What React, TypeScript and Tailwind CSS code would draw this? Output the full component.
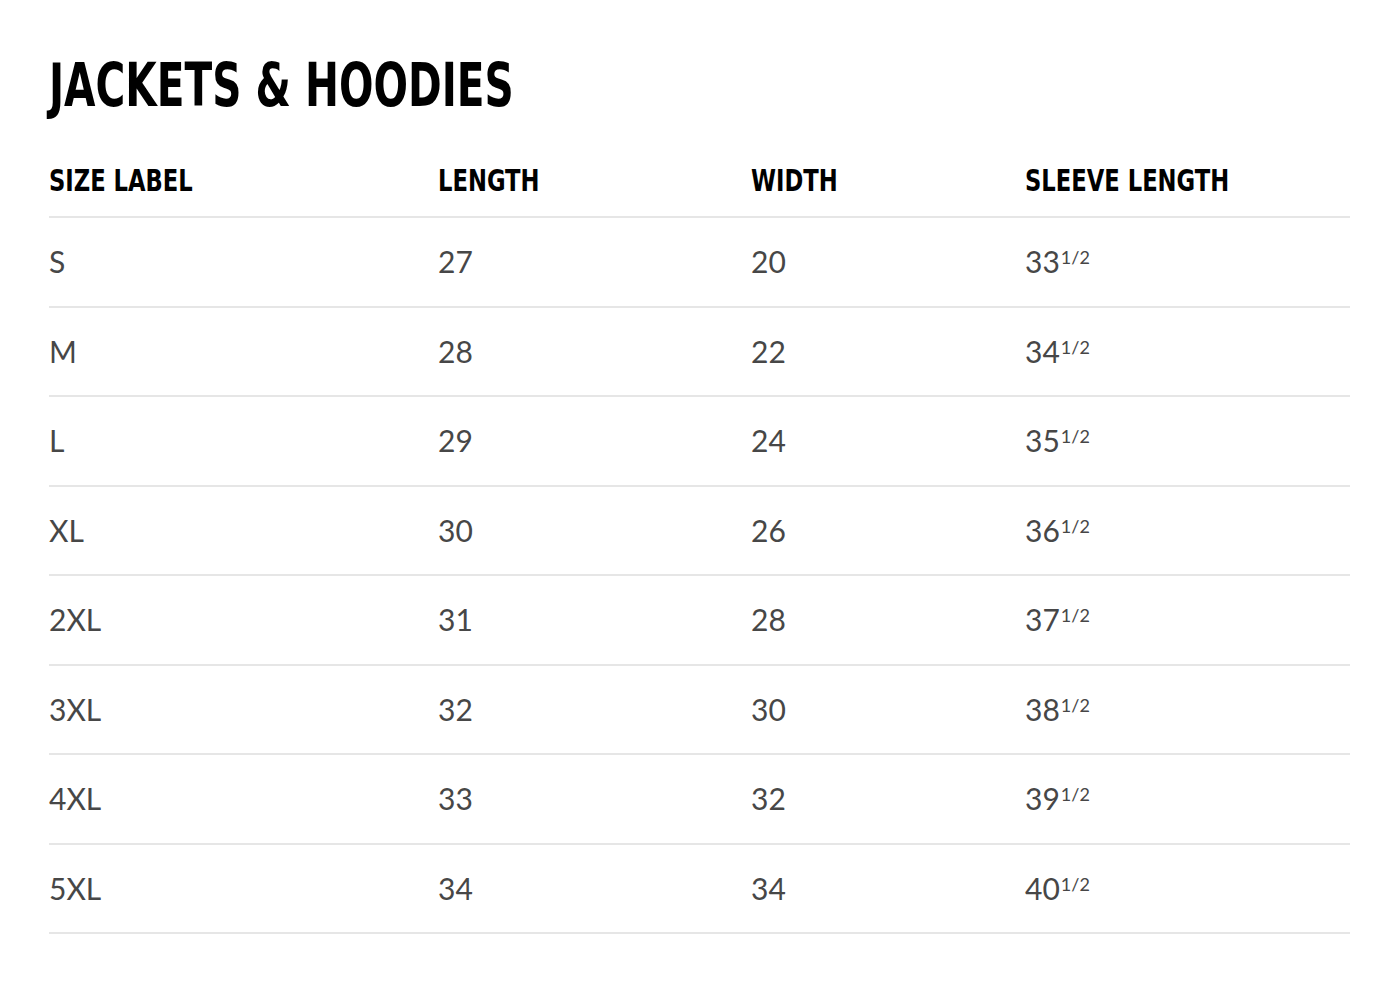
import * as React from "react";

const rows: [string, string, string, string][] = [
  ["S", "27", "20", "33"],
  ["M", "28", "22", "34"],
  ["L", "29", "24", "35"],
  ["XL", "30", "26", "36"],
  ["2XL", "31", "28", "37"],
  ["3XL", "32", "30", "38"],
  ["4XL", "33", "32", "39"],
  ["5XL", "34", "34", "40"],
];

// condensed heavy face, squeezed to match the narrow display font
const cond =
  "inline-block origin-left font-['DejaVu_Sans_Condensed','DejaVu_Sans',sans-serif] font-bold text-black whitespace-nowrap";
const grid = "grid grid-cols-[389px_313px_274px_1fr] items-center";

export default function App() {
  return (
    <div className="min-h-[998px] bg-white pl-[49px] pr-[50px] pt-[53px]">
      <h1 className={`${cond} scale-x-[0.752] text-[60px] leading-[64px]`}>JACKETS &amp; HOODIES</h1>
      <div className="mt-[37px]">
        <div className={`${grid} h-[64px] border-b-2 border-[#e6e6e6] pb-[8px]`}>
          {["SIZE LABEL", "LENGTH", "WIDTH", "SLEEVE LENGTH"].map((h) => (
            <div key={h}>
              <span className={`${cond} scale-x-[0.84] text-[30px] leading-none`}>{h}</span>
            </div>
          ))}
        </div>
        {rows.map((r) => (
          <div
            key={r[0]}
            className={`${grid} h-[89.5px] border-b-2 border-[#e6e6e6] font-['Lato',sans-serif] text-[30px] text-[#474747]`}
          >
            <div>{r[0]}</div>
            <div>{r[1]}</div>
            <div>{r[2]}</div>
            <div>
              {r[3]}
              <sup className="ml-[1px] text-[18px]">1/2</sup>
            </div>
          </div>
        ))}
      </div>
    </div>
  );
}
